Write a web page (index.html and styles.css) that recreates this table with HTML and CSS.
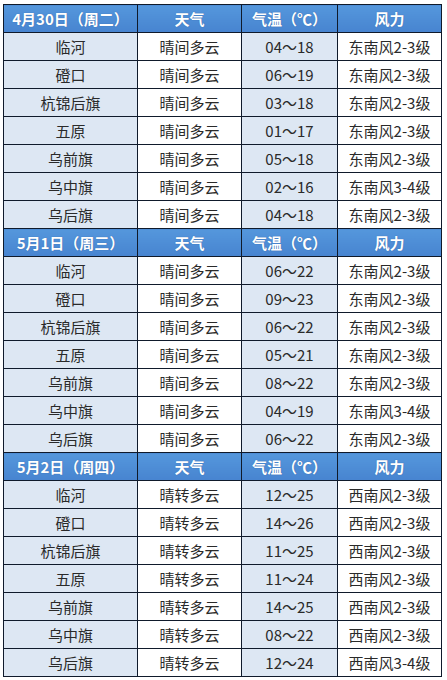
FILE: index.html
```html
<!DOCTYPE html>
<html lang="zh-CN">
<head>
<meta charset="utf-8">
<title>天气预报</title>
<link rel="stylesheet" href="styles.css">
</head>
<body>
<table class="wx">
  <colgroup>
    <col class="c1"><col class="c2"><col class="c3"><col class="c4">
  </colgroup>
  <tbody>
    <tr class="hd"><td>4月30日（周二）</td><td>天气</td><td>气温（℃）</td><td>风力</td></tr>
    <tr><td>临河</td><td>晴间多云</td><td>04～18</td><td>东南风2-3级</td></tr>
    <tr><td>磴口</td><td>晴间多云</td><td>06～19</td><td>东南风2-3级</td></tr>
    <tr><td>杭锦后旗</td><td>晴间多云</td><td>03～18</td><td>东南风2-3级</td></tr>
    <tr><td>五原</td><td>晴间多云</td><td>01～17</td><td>东南风2-3级</td></tr>
    <tr><td>乌前旗</td><td>晴间多云</td><td>05～18</td><td>东南风2-3级</td></tr>
    <tr><td>乌中旗</td><td>晴间多云</td><td>02～16</td><td>东南风3-4级</td></tr>
    <tr><td>乌后旗</td><td>晴间多云</td><td>04～18</td><td>东南风2-3级</td></tr>
    <tr class="hd"><td>5月1日（周三）</td><td>天气</td><td>气温（℃）</td><td>风力</td></tr>
    <tr><td>临河</td><td>晴间多云</td><td>06～22</td><td>东南风2-3级</td></tr>
    <tr><td>磴口</td><td>晴间多云</td><td>09～23</td><td>东南风2-3级</td></tr>
    <tr><td>杭锦后旗</td><td>晴间多云</td><td>06～22</td><td>东南风2-3级</td></tr>
    <tr><td>五原</td><td>晴间多云</td><td>05～21</td><td>东南风2-3级</td></tr>
    <tr><td>乌前旗</td><td>晴间多云</td><td>08～22</td><td>东南风2-3级</td></tr>
    <tr><td>乌中旗</td><td>晴间多云</td><td>04～19</td><td>东南风3-4级</td></tr>
    <tr><td>乌后旗</td><td>晴间多云</td><td>06～22</td><td>东南风2-3级</td></tr>
    <tr class="hd"><td>5月2日（周四）</td><td>天气</td><td>气温（℃）</td><td>风力</td></tr>
    <tr><td>临河</td><td>晴转多云</td><td>12～25</td><td>西南风2-3级</td></tr>
    <tr><td>磴口</td><td>晴转多云</td><td>14～26</td><td>西南风2-3级</td></tr>
    <tr><td>杭锦后旗</td><td>晴转多云</td><td>11～25</td><td>西南风2-3级</td></tr>
    <tr><td>五原</td><td>晴转多云</td><td>11～24</td><td>西南风2-3级</td></tr>
    <tr><td>乌前旗</td><td>晴转多云</td><td>14～25</td><td>西南风2-3级</td></tr>
    <tr><td>乌中旗</td><td>晴转多云</td><td>08～22</td><td>西南风2-3级</td></tr>
    <tr><td>乌后旗</td><td>晴转多云</td><td>12～24</td><td>西南风3-4级</td></tr>
  </tbody>
</table>
</body>
</html>
```
FILE: styles.css
```css
html, body {
  margin: 0;
  padding: 0;
  background: #ffffff;
}

body {
  padding: 4px 0 0 3px;
}

.wx {
  border-collapse: collapse;
  table-layout: fixed;
  width: 439px;
  font-family: "Noto Sans CJK SC", "Noto Sans", sans-serif;
  font-size: 15px;
  color: #2a2a2a;
}

.c1 { width: 134px; }
.c2 { width: 104px; }
.c3 { width: 96px; }
.c4 { width: 104px; }

.wx td {
  border: 1px solid #0f1a2b;
  height: 27px;
  padding: 0;
  line-height: 27px;
  text-align: center;
  white-space: nowrap;
  overflow: hidden;
}

.wx td:nth-child(1),
.wx td:nth-child(3) {
  background: #dde7f3;
}

.wx td:nth-child(2),
.wx td:nth-child(4) {
  background: #ffffff;
}

.wx tr.hd td {
  background: linear-gradient(#5597dc, #4784d0);
  color: #ffffff;
  font-weight: bold;
  text-shadow: 0 0 1px rgba(30, 70, 130, 0.6);
}
```
